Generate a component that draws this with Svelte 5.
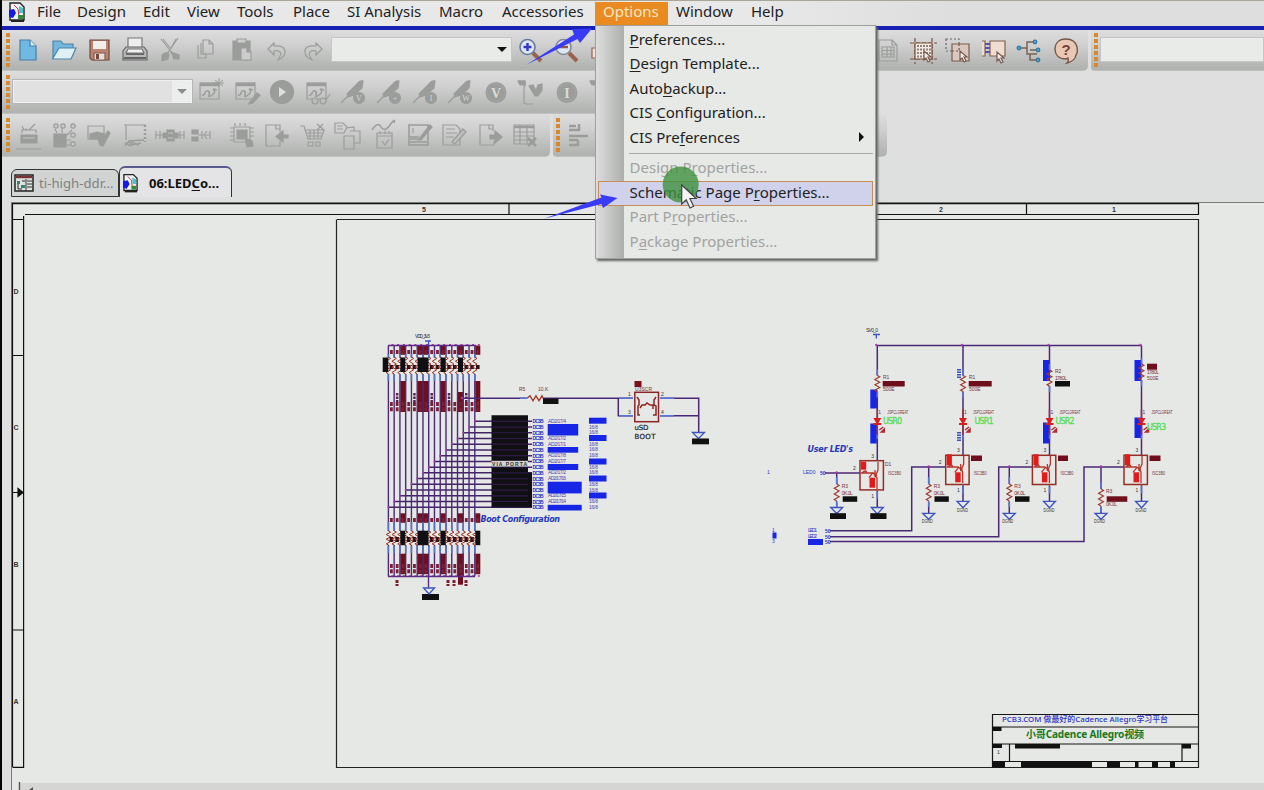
<script>
  const menus = [
    ['File', 40], ['Design', 66], ['Edit', 44], ['View', 50], ['Tools', 56], ['Place', 54],
    ['SI Analysis', 92], ['Macro', 63], ['Accessories', 101], ['Options', 73], ['Window', 75], ['Help', 50]
  ];

  const options = [
    { a: '', k: 'P', b: 'references...' },
    { a: '', k: 'D', b: 'esign Template...' },
    { a: 'Auto', k: 'b', b: 'ackup...' },
    { a: 'CIS ', k: 'C', b: 'onfiguration...' },
    { a: 'CIS Pre', k: 'f', b: 'erences', sub: true },
    { sep: true },
    { a: 'Design P', k: 'r', b: 'operties...', off: true },
    { a: 'Schematic Page P', k: 'r', b: 'operties...', hot: true },
    { a: 'Part P', k: 'r', b: 'operties...', off: true },
    { a: 'P', k: 'a', b: 'ckage Properties...', off: true }
  ];

  const probe = (tag) =>
    `<path d="M4 27L14 17" stroke-width="1.4"/><path d="M10 18L19 9Q23 4 26 5L25 12L17 19L11 21Z" fill="currentColor"/><circle cx="22" cy="22" r="5.5" fill="currentColor"/><text x="22" y="25" text-anchor="middle" font-size="8" fill="#d4d5d4" stroke="none" font-family="Liberation Serif">${tag}</text>`;
  const ball = (tag) =>
    `<circle cx="16" cy="16.500" r="10.5" fill="currentColor" stroke="none"/><circle cx="16" cy="16.500" r="8.600" stroke="#aaa" stroke-width=".6"/><text x="16" y="21.500" text-anchor="middle" font-size="14" font-weight="bold" fill="#dadbda" stroke="none" font-family="Liberation Serif">${tag}</text>`;
  const scope = '<path d="M5 7h19v16H5z"/><path d="M5 8.500h19" stroke-width="3.500"/><path d="M7 19q2 1 3-2t3-2 1 4 3 0 2-5 3 0" stroke-width="1.500"/>';

  const art = {
    create: '<path d="M8 6h10l6 6v14H8z" fill="#70b9e2" stroke="#467ea8"/><path d="M18 6v6h6" fill="#d5edf8" stroke="#467ea8"/>',
    open: '<path d="M5 25V7h8l2 3h10v4" fill="#75b7dc" stroke="#4e83aa"/><path d="M4.500 25L11 14h17l-5 11z" fill="#dff0f7" stroke="#4e83aa"/>',
    save: '<path d="M7 6h19v20H9l-2-2z" fill="#b98572" stroke="#75483d"/><path d="M10 7h13v8H10z" fill="#f2eeeb" stroke="none"/><path d="M11 19h11v7H11z" fill="#e5dfdc" stroke="#86594d"/><path d="M13 20h3v5h-3z" fill="#75483d" stroke="none"/>',
    print: '<path d="M9 15V4h14v11" fill="#eee" stroke="#777"/><path d="M7 13h18l3 4v9H4v-9z" fill="#b9bab9" stroke="#666"/><path d="M7 20h18M5 24h22" stroke="#666" stroke-width="2"/><path d="M9 15h14l2 4H7z" fill="#f0f0f0" stroke="#777"/>',
    cut: '<path d="M7 5l12 15M24 4L13 20M9 5l8 10M22 5l-5 9"/><path d="M8 21q4-4 7-1l-1 5-6 2zM17 18l8 3v4h-5z" fill="currentColor"/>',
    copy: '<path d="M8 11v13h8v-4H11V9"/><path d="M13 6h6l4 4v10H13zM19 6v4h4"/>',
    paste: '<path d="M7 7h17v19H7z" fill="currentColor"/><path d="M11 5h9v4h-9z" fill="#ccc"/><path d="M15 14h6l4 4v8H15zM21 14v4h4" fill="#ccc"/>',
    undo: '<path d="M7 15l6-6v3q11-1 11 6 0 5-7 8 4-6 2-8t-6-1v4z"/>',
    redo: '<path d="M25 15l-6-6v3Q7 11 8 18q0 5 7 8-4-6-2-8t6-1v4z"/>',
    zoomin: '<path d="M19 19l8 8" stroke="#9b6250" stroke-width="4"/><circle cx="13.500" cy="13" r="7.500" fill="#dce7f2" stroke="#647b9b" stroke-width="1.600"/><path d="M9.500 13h8M13.500 9v8" stroke="#3438c5" stroke-width="2.500"/>',
    zoomout: '<path d="M19 19l8 8" stroke="#9b6250" stroke-width="4"/><circle cx="13.500" cy="13" r="7.500" fill="#dce7f2" stroke="#86879a" stroke-width="1.600"/><path d="M9 13h9" stroke="#965948" stroke-width="2.500"/>',
    area: '<path d="M7 14h16v10H7z" fill="#eee3dd" stroke="#985e4b"/>',
    doc: '<path d="M7 6h13l5 5v16H7zM20 6v5h5"/><path d="M10 13h12v10H10zM10 16.500h12M10 20h12M15 13v10M19 13v10"/>',
    grid: '<path d="M8 4v26M25 4v26M3 9h27M3 25h27" stroke="#79503f" stroke-dasharray="4 2"/><path d="M8 9h17v16H8z" fill="#f5e9e1" stroke="#79503f"/><path d="M11 11v13M14 11v13M17 11v13M20 11v10M23 11v10" stroke="#493f3b" stroke-dasharray="2 1.500"/><path d="M17 17v9l2-2 2 4 2-1-2-4h3z" fill="#eee" stroke="#795a4e"/>',
    select: '<path d="M3 5h13v12H3z" stroke="#666" stroke-dasharray="2 2"/><path d="M9 10h17v17H9z" fill="#d9c8bf" stroke="#7d5a4b"/><path d="M16 10v7H9" stroke-dasharray="2 2" stroke="#6d5045"/><path d="M17 17v9l2-2 2 4 2-1-2-4h3z" fill="#eee" stroke="#795a4e"/>',
    pins: '<path d="M4 7h3v15H4M12 7h15v15H12z" fill="#efddd1" stroke="#85614f"/><path d="M7 10h5M7 14h5M7 18h5" stroke="#5650b5" stroke-width="1.800"/><path d="M19 18v9l2-2 2 4 2-1-2-4h3z" fill="#eee" stroke="#795a4e"/>',
    tree: '<path d="M5 14h8M20 8h-7v12h10M16 20v6h7M16 16h7" stroke="#7c6353" stroke-width="1.500"/><g fill="#4e9dc4" stroke="#317ba1"><circle cx="5" cy="14" r="1.800"/><circle cx="21" cy="8" r="1.800"/><circle cx="24" cy="16" r="1.800"/><circle cx="24" cy="26" r="1.800"/></g>',
    help: '<path d="M16 5C8 5 5 10 5 15s3 10 11 10l2-1q1 3-1 5 8-2 9-8 2-3 1-8-2-8-11-8z" fill="#e9c7b5" stroke="#7b5547" stroke-width="1.400"/><text x="16" y="20.500" text-anchor="middle" font-size="15" font-weight="bold" font-family="Liberation Sans" stroke="none" fill="#704236">?</text>',
    simnew: scope + '<path d="M24 2v9M20 4l8 6M28 4l-8 6M19 7h10" stroke-width="1"/>',
    simedit: scope + '<path d="M18 27l8-10 3 2-7 8-4 1z" fill="currentColor"/>',
    run: '<circle cx="16" cy="16" r="11.500" fill="currentColor"/><path d="M13 11l7 5-7 5z" fill="#ddd" stroke="none"/>',
    view: scope + '<circle cx="13" cy="25" r="3" fill="#bbb"/><circle cx="21" cy="25" r="3" fill="#bbb"/><path d="M24 24l4-6"/>',
    pv: probe('V'), pd: probe('+'), pi: probe('I'), pw: probe('W'), bv: ball('V'), bi: ball('I'),
    vprobe: '<path d="M3 5h7v5H9v17l2 1h7"/><path d="M3 5h7v4H5z" fill="currentColor"/><path d="M14 10l4-1 3 6 2-6 4-1v6l-4 6h-3z" fill="currentColor"/>',
    part: '<path d="M9 16h16v8H9z" fill="currentColor"/><path d="M10 14v-3h14v3M12 11l-2-4M13 10l4 1 6-6"/><path d="M11 19h12" stroke="#c4c5c4"/><path d="M4 30h25"/>',
    netgrp: '<path d="M6 15h12v13H6z" fill="currentColor"/><path d="M9 14L7 10M14 14V9M18 17l6-6M19 21h4M19 26h4"/><g fill="#c8c9c8"><circle cx="8" cy="7" r="2.200"/><circle cx="15" cy="7" r="2.200"/><circle cx="25" cy="7" r="2.200"/><circle cx="25" cy="16" r="2.200"/><circle cx="25" cy="25" r="2.200"/></g>',
    check: '<path d="M5 7h16v13H5z"/><path d="M7 15l7-2 7 2v5H7zM17 26l-2-6 4 1 6-9 2 2-7 13z" fill="currentColor"/>',
    board: '<path d="M7 21V6M5 6h22" /><path d="M26 6v17" stroke-width="2.500" stroke-dasharray="2 2"/><path d="M9 22l16-1M6 27q3-7 7-1l9-2M6 24l6 3M12 23l8 3" stroke-width="1.500"/>',
    join: '<path d="M2 12v8M2 16h7M24 16h6M30 12v8M6 12v8M26 12v8"/><path d="M9 14h4v5H9zM20 14h4v5h-4zM13 11h7v11h-7z" fill="currentColor"/><path d="M14 14h5M14 19h5" stroke="#c4c5c4"/>',
    split: '<path d="M2 11h6v4H2zM2 18h6v4H2z" fill="currentColor"/><path d="M8 16h5M12 12v8M17 12l-3 4 3 4M15 16h5M20 12v8"/>',
    chip: '<path d="M8 8h16v15H8z"/><path d="M11 11h10v9H11zM19 19l7 3 1 5-6 1z" fill="currentColor"/><path d="M4 9h4M4 13h4M4 17h4M4 21h4M24 9h4M24 13h4M24 17h4M9 7V4M14 7V4M19 7V4"/>',
    back: '<path d="M19 13V6H5v21h14v-5M15 6v4h4"/><path d="M27 16h-5v-4l-7 5.500 7 5.500v-4h5z" fill="currentColor"/>',
    cart: '<path d="M3 7h4l4 13h13l3-9H8M10 14h15M11 17h14M13 11v9M17 11v9M21 11v9M20 5l7 6M26 5l-6 6"/><path d="M11 23h5v4h-5zM19 23h4v4h-4z"/>',
    props: '<path d="M3 4h8l4 4-3 6H3zM5 7h6M5 10h6"/><path d="M12 17h10v13H12zM18 12h10v12h-6M14 9l8-1v4"/>',
    note: '<path d="M4 11q6-9 9-3t9-2 4-2" stroke-width="1.500"/><path d="M9 14h15v15H9zM9 17h15M12 12v3M17 12v3M21 12v3M14 22l3 4 4-6"/>',
    form: '<path d="M5 6h19v20H5zM6 23h17M6 18h9M6 20h11" stroke-width="1.600"/><path d="M14 21l12-15 2 2-11 13z" fill="currentColor"/><path d="M9 9v5"/>',
    write: '<path d="M4 6h13l4 4v16H4zM7 10h9M7 14h11M7 18h8"/><path d="M13 23l11-13 3 3-11 12z" fill="#bcbdbc"/>',
    exp: '<path d="M18 12V6H5v20h14v-4M14 6v4h4"/><path d="M15 16h5v-4l7 6-7 6v-4h-5z" fill="currentColor"/>',
    table: '<path d="M4 6h20v19H4zM4 13h20M4 17h20M4 21h20M10 6v19M17 6v19"/><path d="M4 8h20M18 19l8 8M26 19l-8 8" stroke-width="2.500"/>',
    align: '<path d="M7 7h7M7 11h10V5M7 17h19M7 21h9M7 26h9v-5" stroke-width="2.500"/>'
  };

  const row1 = ['create', 'open', 'save', 'print', 'cut', 'copy', 'paste', 'undo', 'redo'];
  const row1b = ['doc', 'grid', 'select', 'pins', 'tree', 'help'];
  const row2 = ['simnew', 'simedit', 'run', 'view', 'pv', 'pd', 'pi', 'pw', 'bv', 'vprobe', 'bi', 'vprobe'];
  const row3 = ['part', 'netgrp', 'check', 'board', 'join', 'split', 'chip', 'back', 'cart', 'props', 'note', 'form', 'write', 'exp', 'table'];

  // Boot configuration pull-up / pull-down bank
  const bank = Array.from({ length: 16 }, (_, i) => ({ x: 388.4 + 5.76 * i, i, y: 421.3 + 5.73 * (15 - i) }));
  const strips = [[400.3, 5], [417.5, 11], [440.5, 5.2], [458, 5], [475.3, 5]];
  const zig = (x, y, h, w = 3) => {
    let d = `M${x} ${y}`;
    for (let n = 0; n < 6; n++) d += `L${x + (n % 2 ? -w : w)} ${y + (h * (n + 0.5)) / 6}`;
    return d + `L${x} ${y + h}`;
  };
  const bankText = ['AD2/17/4', '', '', 'AD2/17/2', 'AD2/17/1', '', 'AD2/17/8', 'AD2/17/7', '', 'AD2/17/2', 'AD2/17/16', '', '', 'AD2/17/15', 'AD2/17/14', ''];
  const blueA = [[424, 30.5, 11.5], [447, 30.5, 5.7], [464, 30.5, 6], [481.7, 34, 11.7], [504.8, 34, 5.7]];
  const blueB = [417.7, 435, 458.5, 475.5, 492.5];

  // LED driver channels
  const leds = [
    { x: 877.3, name: 'USR0', bx: 860, by: 460.7, r: 375.5, tx: 883, ty: 424, rx: 836.7, ry: 484, gy: 507.5, rg: 507.5, base: 473 },
    { x: 963, name: 'USR1', bx: 945.7, by: 455.3, r: 375.5, tx: 974.5, ty: 424, rx: 928.7, ry: 484, gy: 501.3, rg: 513.3, base: 467, lx: 911.7, ly: 530.7 },
    { x: 1049.5, name: 'USR2', bx: 1032.4, by: 455.3, r: 370, tx: 1055.5, ty: 424, rx: 1009.3, ry: 484, gy: 501.3, rg: 513.3, base: 467, lx: 998.7, ly: 536.8 },
    { x: 1141.5, name: 'USR3', bx: 1124, by: 455.3, r: 364, tx: 1147, ty: 430, rx: 1101, ry: 489, gy: 501.3, rg: 513.3, base: 467, lx: 1084, ly: 541.5 }
  ];
  const maroon = [[882.7, 381, 22, 5.5], [968.7, 381, 23, 5.5], [1147, 363.7, 10, 6], [971, 455.5, 11, 5.5], [1058, 455.5, 10, 5.5], [1149.5, 455.5, 11, 5.5], [1106.7, 496.3, 20.6, 5.5]];
  const black = [[842.7, 496.3, 14.5, 5.5], [934.5, 496.3, 14.3, 5.5], [1015, 496.3, 14.5, 5.5], [1055, 381, 15, 5.5], [830, 513.2, 16, 5.8], [870.3, 513.2, 16.2, 5.8]];
  const blue = [[870.3, 389.5, 7, 19], [870.3, 423.5, 6.5, 20], [1043, 360, 7, 21], [1043, 422.5, 6.5, 21], [1134.5, 360, 7, 21], [1134.5, 417.5, 6.5, 20.5]];
</script>

{#snippet icon(name, off)}
  <span class="cell" class:off>
    <svg width="32" height="32" viewBox="0 0 32 32" fill="none" stroke="currentColor" stroke-width="1.2">{@html art[name]}</svg>
  </span>
{/snippet}

{#snippet grip()}
  <span class="grip"><i></i><i></i><i></i><i></i><i></i><i></i></span>
{/snippet}

{#snippet page(w, h)}
  <svg width={w} height={h} viewBox="0 0 16 20">
    <path d="M1 1h10l4 4v13H1z" fill="#f1f2f5" stroke="#222" stroke-width="1.4" />
    <path d="M2 19h13" stroke="#222" stroke-width="2" />
    <path d="M0 8l5-1 2 4-3 5-4-1z" fill="#151be0" />
    <path d="M5 3l4 4 1 8" stroke="#c33849" fill="none" />
    <path d="M10 4l4 2v5h-4z" fill="#4bc3c7" />
    <path d="M9 13h5v4H9z" fill="#368b38" />
  </svg>
{/snippet}

<div class="app">
  <nav class="menubar">
    <span class="logo">{@render page(16, 20)}</span>
    {#each menus as [m, w]}
      <span class="menu" class:active={m === 'Options'} style:width="{w}px">{m}</span>
    {/each}
  </nav>

  <div class="row first">
    <div class="bar main1">
      {@render grip()}
      {#each row1 as n, i}{@render icon(n, i > 3)}{/each}
      <div class="combo live"><b></b></div>
      {@render icon('zoomin', false)}{@render icon('zoomout', false)}{@render icon('area', false)}
      <span class="gap"></span>
      {#each row1b as n, i}{@render icon(n, i === 0)}{/each}
    </div>
    <div class="bar rest">{@render grip()}<div class="combo wide"></div></div>
  </div>
  <div class="row second">
    <div class="bar main2">
      {@render grip()}
      <div class="combo dim"><b></b></div>
      {#each row2 as n}{@render icon(n, true)}{/each}
    </div>
  </div>
  <div class="row third">
    <div class="bar main3">
      {@render grip()}
      {#each row3 as n}{@render icon(n, true)}{/each}
    </div>
    <div class="bar tail3">{@render grip()}{@render icon('align', true)}</div>
  </div>

  <div class="tabs">
    <div class="tab">
      <svg width="20" height="18" viewBox="0 0 20 18">
        <path d="M1 1h18v16H1z" fill="#dfe3df" stroke="#222" stroke-width="1.5" />
        <path d="M2 3h16" stroke="#7b3434" stroke-width="2.5" />
        <path d="M12 5v12M13 7h5M13 10h5M13 13h5" stroke="#333" />
        <path d="M3 7h3v3H3zM7 11h4v3H7z" fill="#3a8074" />
        <path d="M4 10v5h4M8 7h3" stroke="#222" fill="none" />
      </svg>
      <span>ti-high-ddr...</span>
    </div>
    <div class="tab current">{@render page(15, 20)}<span>06:LED<u>C</u>o...</span></div>
  </div>

  <svg class="sheet" width="1264" height="588" viewBox="0 202 1264 588" fill="none">
    <rect x="11" y="202" width="1253" height="588" fill="#e6e8e5" />
    <path d="M11 202.500H1264M11.500 202V790" stroke="#777b79" />
    <g stroke="#111" stroke-width="1.200">
      <path d="M12.500 767V203.700H1198.500V214.500H25M12.500 219.500H23.600M23.600 216V767.400H12.500M12 355.500h12M12 630h12M12 492.500h12M509 204v11M681.500 204v11M1026.500 204v11" />
      <path d="M337 219.500H1198.500V767.500H336.500V219.500" stroke="#222" />
      <path d="M18 488.500l5 4-5 4z" fill="#111" />
    </g>
    <g class="ruler">
      <text x="424" y="212">5</text><text x="941" y="212">2</text><text x="1114" y="212">1</text>
      <text x="16" y="293.500">D</text><text x="16" y="429.500">C</text><text x="16" y="567">B</text><text x="16" y="704">A</text>
    </g>
    <path d="M21 783H1264V790H21z" fill="#d5d6d4" /><path d="M19.500 782v8" stroke="#555" stroke-width="1.500" /><path d="M33 787l-4 3h4z" fill="#555" />

    <!-- boot bank -->
    {#each strips as [x, w]}
      <g fill="#6f0f1b">
        <rect {x} y="345.500" width={w} height="9.300" />
        <rect {x} y={x === 458 ? 392 : 381} width={w} height={x === 458 ? 20 : 31} />
        <rect {x} y="513.300" width={w} height="9.500" />
        <rect {x} y="553.700" width={w} height={x === 458 ? 31 : 20.5} />
      </g>
    {/each}
    {#each bank as c}
      <path d="M{c.x} 345.500V357M{c.x} 374V531M{c.x} 545V576.500" stroke="#4b2a78" stroke-width="1.400" />
      <path d="M{c.x} 354v4M{c.x} 374v7M{c.x} 522v9M{c.x} 546v7" stroke="#5474c8" stroke-width="1.500" />
      <path d="{zig(c.x, 357, 17, 2.2)}{zig(c.x, 531, 14, 2.2)}" stroke="#983022" />
      <path d="M{c.x} {c.y}H532" stroke="#432467" stroke-width="1.500" />
      <circle cx={c.x} cy={c.y} r="1" fill="#b234ab" />
      <path d="M{c.x + 3} 350v5M{c.x + 3} 402v10M{c.x + 3} 518v5M{c.x + 3} 564v10" stroke="#7b2031" stroke-width="2.800" stroke-dasharray="4 1.200" />
      <path d="M{c.x + 3} 365v4M{c.x + 3} 537v5" stroke="#321018" stroke-width="3.600" />
      {#if c.i % 3 === 1}<path d="M{c.x + 3} 393v10" stroke="#5d2350" stroke-width="2.500" stroke-dasharray="2.500 1" />{/if}
      <path d="M{c.x + 3} 344.800h2M{c.x + 3} 576h2" stroke="#b234ab" stroke-width="1.500" />
    {/each}
    <g fill="#101014">
      <rect x="382.700" y="357.500" width="5.600" height="14.500" />
      <rect x="400.300" y="357.500" width="5" height="14.500" /><rect x="417.500" y="357.500" width="11" height="14.500" />
      <rect x="440.500" y="357.500" width="5.200" height="14.500" /><rect x="458" y="357.500" width="5" height="14.500" />
      <rect x="400.300" y="530.700" width="5" height="14.500" /><rect x="417.500" y="530.700" width="11" height="14.500" />
      <rect x="440.500" y="530.700" width="5.200" height="14.500" /><rect x="475.300" y="530.700" width="5" height="14.500" />
      <rect x="422" y="594" width="17" height="6" />
      <path d="M491.500 415.300h36.500v45.400h-36.500zM491.500 466.700h36.500v6h4v34.600h-40.500z" />
    </g>
    <g stroke="#2d1a45" stroke-width="1.200">
      {#each bank as c}<path d="M491 {c.y}h37" />{/each}
    </g>
    <path d="M388 345.500H476M388 576.500H475M428.500 576.500V588" stroke="#5b2a85" stroke-width="1.400" />
    <path d="M425 341h6M428.500 341v4M423.500 588h11l-5.500 6z" stroke="#3d53c2" stroke-width="1.300" />
    <path d="M397 580v6M448 580v6M454 580v6M466 580v6" stroke="#7b2031" stroke-width="3" stroke-dasharray="3 1" />
    <text class="tiny" x="415" y="338" textLength="15">VDD_3V3</text>
    <rect x="491.500" y="461" width="36.500" height="5.500" fill="#d2d3cc" />
    <text class="tiny bold" x="492" y="466" textLength="35">VIA PORTA</text>

    {#each bank.toReversed() as c, i}
      <text class="tiny blue bold" x="532.500" y={c.y + 2} textLength="11">DC3B</text>
      {#if bankText[i]}<text class="tiny violet" x="548" y={c.y + 1.5} textLength="18">{bankText[i]}</text>{/if}
      <text class="tiny violet" x="589" y={c.y + 1.5} textLength="9">16/8</text>
    {/each}
    <g fill="#1726e6">
      {#each blueA as [y, w, h]}<rect x="547.700" {y} width={w} height={h} />{/each}
      {#each blueB as y}<rect x="589" {y} width="17.500" height="6" />{/each}
      {#each blue as [x, y, width, height]}<rect {x} {y} {width} {height} />{/each}
      <rect x="808" y="539" width="15" height="6" /><rect x="772.500" y="532.500" width="4" height="6" />
    </g>
    <text class="caption" x="480.500" y="521.500" textLength="79.500">Boot Configuration</text>
    <text class="caption" x="807.500" y="451.500" textLength="45.500">User LED's</text>

    <!-- USB boot switch -->
    <path d="M463 398.300H526M543 398.300H633M618.300 398.300V415.700H633M660 398.300H698.700V433M660 415.700H698.700" stroke="#4a2877" stroke-width="1.500" />
    <path d="M520 398.300h7M619 398.300h14M619 415.700h14M660 398.300h14M660 415.700h14" stroke="#5575d9" stroke-width="1.500" />
    <path d="M527 398.300l3-2.500 3 5 3-5 3 5 3-5 1 2.500" stroke="#a13726" stroke-width="1.300" />
    <circle cx="462" cy="398" r="1.300" fill="#b234ab" />
    <rect x="543" y="398.500" width="15.500" height="5.500" fill="#111" />
    <rect x="634.800" y="392.300" width="23.700" height="29.400" stroke="#8b2424" stroke-width="1.500" />
    <path d="M637 397l2 3v5l-1 1v9h2M656 397l-2 3v5l2 1v9h-3M640 408l2-3h3l2-2 3 2h3v4" stroke="#8b2424" stroke-width="1.500" />
    <rect x="634.500" y="381" width="7" height="6" fill="#7b101a" />
    <path d="M692.500 432.500h12l-6 6z" stroke="#3d53c2" stroke-width="1.300" />
    <rect x="692" y="438.500" width="17" height="5.800" fill="#111" />
    <g class="tiny red">
      <text x="519" y="391">R5</text><text x="538" y="391">10.K</text><text x="635" y="391" textLength="17">U3SCR</text>
    </g>
    <g class="tiny"><text x="628" y="396">1</text><text x="628" y="413.500">3</text><text x="661" y="396">2</text><text x="661" y="413.500">4</text></g>
    <text class="label" x="634.500" y="430" textLength="14">uSD</text><text class="label" x="634.500" y="438.500" textLength="21">BOOT</text>

    <!-- LED drivers -->
    <g stroke="#4a2877" stroke-width="1.500">
      <path d="M877.300 345.500H1141.500" />
      <path d="M825 473H860" />
      {#each leds as l}
        <path d="M{l.x} 345.500V{l.r}M{l.x} {l.r + 16}V{l.by}M{l.x} {l.by + 30}V{l.gy}" />
        <path d="M{l.rx} {l.base}V{l.ry}M{l.rx} {l.ry + 18}V{l.rg}" />
        {#if l.lx}<path d="M{l.bx} {l.base}H{l.lx}V{l.ly}H830" />{/if}
      {/each}
    </g>
    <path d="M873 334.500h7M876.300 334.500v4" stroke="#3d53c2" stroke-width="1.300" />
    <text class="tiny" x="866" y="332" textLength="12">SV0_0</text>
    {#each leds as l, i}
      <circle cx={l.x - 1} cy="345" r="1.200" fill="#b234ab" />
      <path d="M{l.x} {l.r - 6}v6M{l.x} {l.r + 16}v6M{l.x} 433v6M{l.rx} {l.ry - 7}v7M{l.rx} {l.ry + 17}v6M{l.x} {l.by + 31}v7" stroke="#5575d9" stroke-width="1.500" />
      <path d="{zig(l.x, l.r, 16, 2.4)}{zig(l.rx, l.ry, 17, 2.4)}" stroke="#993d33" stroke-width="1.200" />
      <path d="M{l.x} 409V435" stroke="#983047" stroke-width="1.500" />
      <path d="M{l.x - 4} 418h8l-3 5h3v2h-8v-2h3z" fill="#dc1d1d" />
      <path d="M{l.x + 2} 430l4-3M{l.x + 4} 432l3-3v3z" stroke="#ad2730" stroke-width="1.500" />
      <rect x={l.bx} y={l.by} width="23.400" height="29.200" stroke="#952d27" stroke-width="1.500" />
      <rect x={l.bx + 1} y={l.by + (i ? -1 : 1)} width="5.200" height={i ? 11 : 8} fill="#e61919" />
      <rect x={l.bx + 9.5} y={l.by + 17} width="5.500" height="10" fill="#e61919" />
      <path d="M{l.bx + 1} {l.base}h12M{l.bx + 2} {l.base}q4-4 5 0M{l.bx + 15} {l.base - 3}v7l3-7v-8M{l.bx + 14} {l.base + 1}l3 4v11M{l.bx + 9} {l.by + 17}l4-5 4 3" stroke="#b6342c" stroke-width="1.300" />
      <path d="M{l.x - 6} {l.gy}h12l-6 6.500zM{l.rx - 6} {l.rg}h12l-6 6z" stroke="#3d53c2" stroke-width="1.300" />
      <circle cx={l.rx} cy={l.base - 0.5} r="1.200" fill="#b234ab" />
      <text class="usr" x={l.tx} y={l.ty} textLength="19">{l.name}</text>
      <g class="tiny red">
        <text x={l.x + 10} y="414" textLength="21" lengthAdjust="spacingAndGlyphs">JSPCLGREAT</text>
        <text x={l.x + 1} y="413.500">1</text>
        <text x={l.bx + 28} y="475" textLength="13" lengthAdjust="spacingAndGlyphs">ISC3B0</text>
        <text x={l.rx + 5} y={l.ry + 4}>R3</text>
        <text x={l.rx + 5} y={l.ry + (i === 3 ? 17 : 10.5)} textLength="11">0K.0L</text>
      </g>
      <g class="tiny">
        <text x={l.bx - 7} y={l.base - 3}>2</text><text x={l.x - 6} y={l.by - 3}>3</text><text x={l.x - 6} y={l.by + 37}>1</text>
        {#if i}<text x={l.x - 6} y="511.500" textLength="11" lengthAdjust="spacingAndGlyphs">DGND</text><text x={l.rx - 7} y="522.500" textLength="11" lengthAdjust="spacingAndGlyphs">DGND</text>{/if}
      </g>
    {/each}
    <g class="tiny red">
      <text x="883" y="379">R1</text><text x="883" y="391">500E</text><text x="969" y="379">R1</text><text x="969" y="391">500E</text>
      <text x="1055" y="373">R2</text><text x="1055" y="379.500" textLength="12">178.0L</text><text x="1147" y="373.500" textLength="12">178.0L</text><text x="1147" y="379.500">500E</text>
      <text x="885" y="465.500">D1</text>
    </g>
    <g fill="#6f0f1b">{#each maroon as [x, y, width, height]}<rect {x} {y} {width} {height} />{/each}</g>
    <g fill="#101010">{#each black as [x, y, width, height]}<rect {x} {y} {width} {height} />{/each}</g>
    <path d="M959 369v10M959 432v10" stroke="#3a51c7" stroke-width="4" stroke-dasharray="1.500 1" />
    <g class="tiny blue">
      <text x="803" y="474">LED0</text><text x="820" y="475" class="bold">50</text><text x="767" y="474">1</text>
      <text x="808" y="532" textLength="9">LED1</text><text x="808" y="538" textLength="9">LED2</text>
      <text x="825" y="533" class="bold">50</text><text x="825" y="538.500" class="bold">50</text><text x="825" y="544" class="bold">50</text>
      <text x="772" y="532">1</text><text x="772" y="543">3</text>
    </g>

    <!-- title block -->
    <path d="M1198 714.500H992.500V767M992 727H1198M992 744H1198M992 761.500H1198M1009.500 744V761M1182 744V761" stroke="#161616" stroke-width="1.200" />
    <path d="M992 727h9.500v4H992zM992 744h10v4h-10zM1015 744h45v4.500h-45zM1182 744h9v4.500h-9zM992 761.500h13v6h-13zM1021 761.500h71v6h-71zM1107 761.500h13v6h-13zM1135 761.500h3.500v6h-3.500zM1152 761.500h6v6h-6zM1170 761.500h5v6h-5z" fill="#111" />
    <text x="1002" y="722" textLength="166" class="title blue">PCB3.COM 做最好的Cadence Allegro学习平台</text>
    <text x="1026" y="738" textLength="118" class="title green">小哥Cadence Allegro视频</text>
    <text x="997" y="753.500" class="tiny">1</text>
  </svg>

  <div class="dropdown">
    {#each options as o}
      {#if o.sep}
        <div class="sep"></div>
      {:else}
        <div class="item" class:dis={o.off} class:hot={o.hot}>
          <span>{o.a}<u>{o.k}</u>{o.b}</span>
          {#if o.sub}<i class="more"></i>{/if}
        </div>
      {/if}
    {/each}
  </div>

  <svg class="overlay" width="1264" height="790" viewBox="0 0 1264 790">
    <circle cx="680.700" cy="184.500" r="18" fill="#3f913f" opacity=".8" />
    <path d="M681.700 185v19l4.500-4.200 3.800 8.200 3.600-1.700-3.700-7.800h6.300z" fill="#f4f4f4" stroke="#444" stroke-width="1.200" />
    <path d="M526.500 64.700L574 34.500 572 29.300 592 28.500 580 43 577.500 39zM544 218.800L601.500 197.500 600 194.500 617.500 198 603 208 601.500 204z" fill="#3a3cf5" />
  </svg>
  <div class="edge"></div>
</div>

<style>
  .app { position: relative; width: 1264px; height: 790px; overflow: hidden; display: flex; flex-direction: column; background: #dedfde; font: 15px "Noto Sans", "Open Sans", sans-serif; color: #222; }
  .menubar { box-sizing: border-box; height: 30px; flex: none; display: flex; align-items: flex-start; padding: 1px 0 0 9px; border-top: 1px solid #aaa697; border-bottom: 4px solid #1820b4; background: linear-gradient(90deg, #e8e8e8 60%, #dedede 75%); }
  .logo { width: 20px; height: 22px; }
  .menu { box-sizing: border-box; height: 23px; line-height: 19px; padding-left: 8px; white-space: nowrap; }
  .menu.active { background: #e98b20; color: #fae6c5; }
  .row { display: flex; flex: none; }
  .first { height: 41px; }
  .second { height: 43px; }
  .third { height: 43px; }
  .bar { box-sizing: border-box; display: flex; align-items: center; height: 100%; border-radius: 0 5px 5px 4px; background: linear-gradient(#dcdddc 0, #cfd0cf 35%, #b0b2b0 96%, #c4c6c4); padding: 0 0 2px 5px; overflow: hidden; }
  .main1 { width: 1088px; }
  .rest { flex: 1; margin-left: 3px; padding-left: 2px; border-radius: 4px 0 0 4px; }
  .main2 { width: 640px; }
  .main3 { width: 550px; }
  .tail3 { width: 334px; margin-left: 3px; padding-left: 2px; }
  .grip { display: flex; flex: none; flex-direction: column; gap: 2px; width: 5.2px; padding-left: 1px; box-sizing: border-box; }
  .grip i { width: 4px; height: 4px; background: #d98929; }
  .cell { display: flex; flex: none; width: 35.6px; justify-content: center; color: #777; }
  .cell.off { color: #9b9d9b; }
  .gap { flex: none; width: 251px; }
  .combo { box-sizing: border-box; flex: none; width: 181.6px; height: 25px; background: #e9ebe8; border: 1px solid #c5c7c5; display: flex; align-items: center; justify-content: flex-end; padding-right: 4px; }
  .combo b { border: 5px solid transparent; border-top: 5px solid #111; border-bottom: 0; }
  .combo.dim { margin-left: 1.4px; border: 2px solid #f0f1f0; background: linear-gradient(90deg, #e0e1e0 158px, #eceded 158px); outline: 1px solid #b5b6b5; outline-offset: -1px; }
  .combo.dim b { border-top-color: #8b8d8b; }
  .combo.wide { flex: 1; margin-left: 2px; }
  .tabs { display: flex; flex: none; height: 45px; box-sizing: border-box; padding: 9px 0 5px 11px; background: #dedfdf; }
  .tab { box-sizing: border-box; display: flex; align-items: center; gap: 5px; align-self: flex-end; width: 108px; height: 28px; padding-left: 2px; border: 1.5px solid #333; border-radius: 6px 6px 0 0; background: #d2d4d3; color: #808280; font-size: 13.2px; white-space: nowrap; }
  .tab.current { width: 113px; height: 31px; gap: 11px; border-bottom: 0; border-top: 2px solid #595b8d; background: #e4e4e6; color: #111; font-weight: bold; font-size: 13px; padding-left: 3px; }
  .sheet { flex: none; display: block; }
  .ruler text { font: bold 7px "Liberation Sans", sans-serif; fill: #333; text-anchor: middle; }
  .tiny, .tiny text { font-family: "Liberation Sans", sans-serif; font-size: 5px; fill: #333; }
  .red text { fill: #77313a; }
  .blue, .blue text { fill: #2a35c8; }
  .violet { fill: #5547ab; }
  .bold { font-weight: bold; }
  .caption { font: italic bold 8px "DejaVu Sans", sans-serif; fill: #2638ba; }
  .label { font: 7px "DejaVu Sans", sans-serif; fill: #222; stroke: #222; stroke-width: 0.2px; }
  .usr { font: 8px "DejaVu Sans", sans-serif; fill: #55dc55; stroke: #55dc55; stroke-width: 0.3px; }
  .title { font: bold 8.8px "Noto Sans", "Noto Sans CJK SC", sans-serif; }
  .title.blue { font-size: 7.9px; font-weight: 500; }
  .title.green { fill: #17781a; font-size: 10px; }
  .dropdown { position: absolute; left: 595px; top: 25px; box-sizing: border-box; width: 281px; height: 234px; padding: 2px 2px; border: 1px solid #9da09d; background: linear-gradient(90deg, transparent 28px, #e7e9e6 28px), linear-gradient(90deg, #dcdddc, #adafad 28px); box-shadow: 2px 2px 2px #666; }
  .item { box-sizing: border-box; display: flex; align-items: center; justify-content: space-between; height: 24.5px; padding: 0 8px 2px 30.6px; border: 1px solid transparent; line-height: 21px; white-space: nowrap; }
  .item u, .tab u { text-underline-offset: 2px; text-decoration-thickness: 1px; }
  .dis { color: #a1a3a2; }
  .hot { background: #d0d1ea; border-color: #c98c52; }
  .more { border: 5px solid transparent; border-left: 5px solid #111; border-right: 0; }
  .sep { height: 6px; margin-left: 31px; background: linear-gradient(#a8aaa8, #a8aaa8) 0 2px / 100% 1px no-repeat; }
  .overlay { position: absolute; left: 0; top: 0; }
  .edge { position: absolute; left: 0; top: 0; width: 2px; height: 790px; background: #050505; }
</style>
